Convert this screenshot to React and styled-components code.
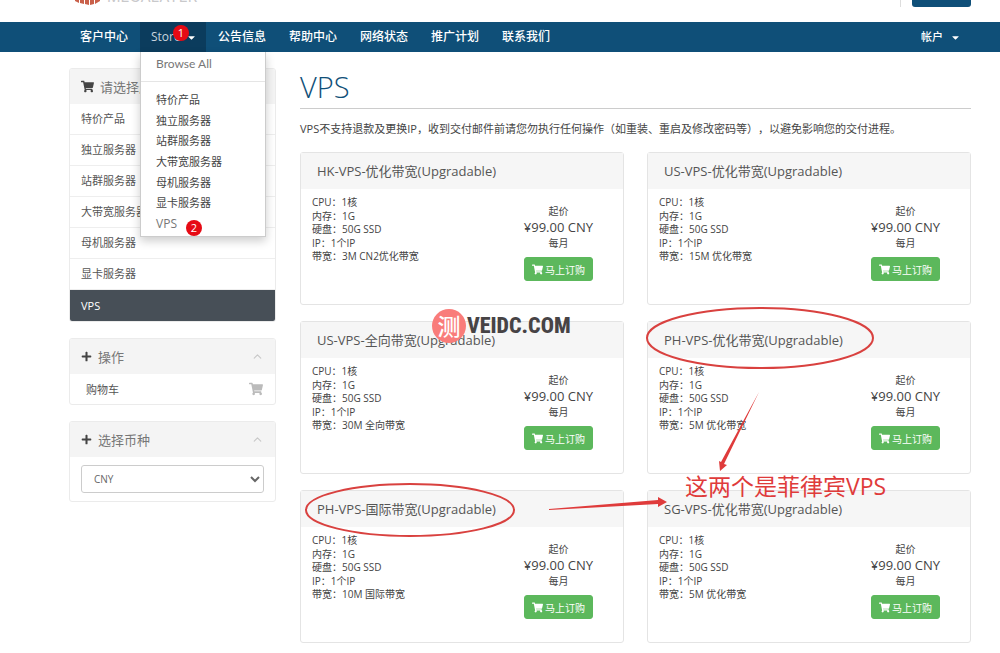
import React from 'react';
import styled, { createGlobalStyle } from 'styled-components';
import { FaShoppingCart, FaPlus, FaCaretDown } from 'react-icons/fa';
import { ChevronUp } from 'lucide-react';

const Global = createGlobalStyle`
  * { box-sizing: border-box; }
  body {
    margin: 0;
    background: #fff;
    color: #444;
    font-family: "Open Sans", "Noto Sans CJK SC", sans-serif;
    font-size: 11px;
    text-spacing-trim: space-all;
  }
  a { color: inherit; text-decoration: none; }
  ul { list-style: none; margin: 0; padding: 0; }
  h1, h2, h3, p { margin: 0; font-weight: 400; }
`;

const Page = styled.div`
  min-height: 100vh;
  overflow: hidden;
`;

const Header = styled.header`
  display: flex;
  justify-content: space-between;
  height: 22px;
  padding: 0 29px 0 69px;
  overflow: hidden;
`;

const Brand = styled.a`
  display: flex;
  align-items: flex-end;
  gap: 5px;
  height: 5px;
  padding-left: 5px;
  color: #c9c9cb;
  font-family: Inter, sans-serif;
  font-size: 15px;
  line-height: 16px;
`;

const HeaderActions = styled.div`
  display: flex;
  align-items: flex-start;
  height: 7px;
  border-left: 1px solid #ddd;
  padding-left: 11px;
`;

const HeaderButton = styled.button`
  width: 59px;
  height: 7px;
  padding: 0;
  border: 0;
  border-radius: 0 0 3px 3px;
  background: #0f4f78;
`;

const Nav = styled.nav`
  display: flex;
  justify-content: space-between;
  height: 30px;
  padding: 0 29px 0 69px;
  background: #0f4f78;
`;

const NavList = styled.ul`
  display: flex;
  gap: 1px;
`;

const NavItem = styled.li`
  position: relative;
  width: ${(p) => (p.$open ? '66px' : 'auto')};
  background: ${(p) => (p.$open ? '#0b3c5d' : 'transparent')};
`;

const NavLink = styled.a`
  display: flex;
  align-items: center;
  gap: ${(p) => p.$gap || '0'};
  height: 30px;
  padding: 0 11px;
  color: ${(p) => (p.$dim ? '#c9d5de' : '#fff')};
  font-size: ${(p) => (p.$small ? '11px' : '12px')};
  font-weight: ${(p) => (p.$dim ? 400 : 500)};
  line-height: 16px;
  svg { flex: none; width: 9px; height: 11px; color: #fff; }
`;

const Badge = styled.span`
  position: absolute;
  left: ${(p) => p.$left};
  top: ${(p) => p.$top};
  width: 16px;
  height: 16px;
  border-radius: 50%;
  background: #e60a14;
  color: #fff;
  font-size: 11px;
  line-height: 16px;
  text-align: center;
`;

const Menu = styled.div`
  position: absolute;
  z-index: 5;
  top: 30px;
  left: 0;
  width: 126px;
  border: 1px solid #ccc;
  border-top: 0;
  background: #fff;
  box-shadow: 0 4px 9px rgba(0, 0, 0, 0.2);
`;

const MenuTop = styled.a`
  display: block;
  height: 30px;
  padding: 0 15px;
  border-bottom: 1px solid #e5e5e5;
  color: #777;
  font-family: Lato, sans-serif;
  font-size: 12px;
  line-height: 24px;
`;

const MenuList = styled.ul`
  display: grid;
  grid-auto-rows: 1fr;
  height: 144px;
  margin: 8px 0 2px;
  li { display: flex; align-items: center; padding: 0 15px; line-height: 16px; }
  li:last-child { font-size: 12px; color: #777; }
`;

const Body = styled.div`
  display: flex;
  align-items: flex-start;
  gap: 24px;
  padding: 16px 29px 10px 69px;
`;

const Sidebar = styled.aside`
  display: flex;
  flex-direction: column;
  gap: 16px;
  flex: 0 0 207px;
`;

const Panel = styled.section`
  border: 1px solid #ebebeb;
  border-radius: 3px;
  overflow: hidden;
`;

const PanelHead = styled.h2`
  display: flex;
  align-items: center;
  gap: 6px;
  height: 35px;
  padding: 0 11px;
  background: #f4f4f4;
  color: #777;
  font-size: 13px;
  line-height: 20px;
  svg { color: #444; }
  svg.up { margin-left: auto; color: #c8c8c8; }
`;

const SideList = styled.div`
  display: grid;
  grid-auto-rows: 31px;
`;

const SideLink = styled.a`
  display: flex;
  align-items: center;
  padding: 0 11px;
  border-bottom: 1px solid #eee;
  color: ${(p) => (p.$active ? '#fff' : '#555')};
  background: ${(p) => (p.$active ? '#474f57' : '#fff')};
  line-height: 16px;
  &:last-child { border-bottom: 0; }
`;

const CartLink = styled.a`
  display: flex;
  align-items: center;
  justify-content: space-between;
  height: 30px;
  padding: 0 12px 0 16px;
  color: #555;
  svg { color: #bbb; }
`;

const SelectWrap = styled.div`
  padding: 8px 11px;
`;

const Select = styled.select`
  display: block;
  width: 100%;
  height: 28px;
  padding: 0 0 0 8px;
  border: 1px solid #ccc;
  border-radius: 3px;
  background: #fff;
  color: #666;
  font: 10px "Open Sans", sans-serif;
`;

const Main = styled.main`
  flex: 1;
  min-width: 0;
`;

const Title = styled.h1`
  height: 41px;
  border-bottom: 1px solid #ccc;
  color: #0f4f78;
  font-family: "Open Sans", sans-serif;
  font-size: 29px;
  font-weight: 300;
  line-height: 38px;
`;

const Notice = styled.p`
  padding: 12px 0 15px;
  line-height: 16px;
`;

const Canvas = styled.div`
  position: relative;
`;

const Grid = styled.div`
  display: grid;
  grid-template-columns: 1fr 1fr;
  gap: 16px 23px;
`;

const Card = styled.article`
  height: 153px;
  border: 1px solid #e4e4e4;
  border-radius: 3px;
`;

const CardHead = styled.h3`
  height: 36px;
  padding: 0 16px;
  background: #f6f6f6;
  color: #555;
  font-size: 13px;
  line-height: 36px;
`;

const CardBody = styled.div`
  display: flex;
  justify-content: space-between;
  padding: 7px 30px 0 11px;
`;

const Specs = styled.ul`
  display: grid;
  grid-auto-rows: 1fr;
  height: 68px;
  font-size: 10px;
  line-height: 13px;
`;

const Offer = styled.div`
  display: flex;
  flex-direction: column;
  align-items: center;
  padding-top: 7px;
  font-size: 10px;
  line-height: 16px;
`;

const Price = styled.strong`
  font-size: 13px;
  font-weight: 400;
  line-height: 16px;
`;

const Order = styled.button`
  display: flex;
  align-items: center;
  justify-content: center;
  gap: 2px;
  width: 69px;
  height: 24px;
  margin-top: 6px;
  padding: 0;
  border: 1px solid #5cb85c;
  border-radius: 3px;
  background: #5cb85c;
  color: #fff;
  font: 10px "Open Sans", "Noto Sans CJK SC", sans-serif;
`;

const Marks = styled.svg`
  position: absolute;
  left: 0;
  top: 0;
  width: 671px;
  height: 491px;
  overflow: visible;
  pointer-events: none;
`;

const Remark = styled.span`
  position: absolute;
  left: 385px;
  top: 318px;
  color: #df3b3b;
  font-size: 23px;
  line-height: 32px;
  white-space: nowrap;
`;

const Watermark = styled.div`
  position: absolute;
  left: 132px;
  top: 157px;
  display: flex;
  align-items: center;
  gap: 1px;
  color: #474345;
  font: 800 22px/34px "Roboto Condensed", "Liberation Serif", serif;
`;

const Seal = styled.span`
  width: 34px;
  height: 34px;
  border-radius: 50%;
  background: #f97c7a;
  color: #fff;
  font: 500 23px/32px "Noto Sans CJK SC", sans-serif;
  text-align: center;
`;

const categories = ['特价产品', '独立服务器', '站群服务器', '大带宽服务器', '母机服务器', '显卡服务器', 'VPS'];
const navAfter = ['公告信息', '帮助中心', '网络状态', '推广计划', '联系我们'];
const plans = [
  ['HK-VPS-优化带宽(Upgradable)', '3M CN2优化带宽'],
  ['US-VPS-优化带宽(Upgradable)', '15M 优化带宽'],
  ['US-VPS-全向带宽(Upgradable)', '30M 全向带宽'],
  ['PH-VPS-优化带宽(Upgradable)', '5M 优化带宽'],
  ['PH-VPS-国际带宽(Upgradable)', '10M 国际带宽'],
  ['SG-VPS-优化带宽(Upgradable)', '5M 优化带宽'],
];

function Plan({ name, bandwidth }) {
  return (
    <Card>
      <CardHead>{name}</CardHead>
      <CardBody>
        <Specs>
          <li>CPU：1核</li>
          <li>内存：1G</li>
          <li>硬盘：50G SSD</li>
          <li>IP：1个IP</li>
          <li>带宽：{bandwidth}</li>
        </Specs>
        <Offer>
          <span>起价</span>
          <Price>¥99.00 CNY</Price>
          <span>每月</span>
          <Order type="button"><FaShoppingCart size={11} />马上订购</Order>
        </Offer>
      </CardBody>
    </Card>
  );
}

export default function App() {
  return (
    <Page>
      <Global />
      <Header>
        <Brand href="#">
          <svg width="28" height="22" viewBox="0 0 28 22" fill="#c9604a" aria-hidden="true">
            <path d="M1 5h4v15l-4-2zM6 3h4v18l-4-1zM11 2h4v20l-4-1zM16 3l4-1v19l-4 1zM21 4l5-2v16l-5 3z" />
          </svg>
          MEGALAYER
        </Brand>
        <HeaderActions><HeaderButton type="button" aria-label="登录" /></HeaderActions>
      </Header>
      <Nav>
        <NavList>
          <NavItem><NavLink href="#">客户中心</NavLink></NavItem>
          <NavItem $open>
            <NavLink href="#" $dim $gap="6px">Store <FaCaretDown /></NavLink>
            <Badge $left="33px" $top="3px">1</Badge>
            <Menu>
              <MenuTop href="#">Browse All</MenuTop>
              <MenuList>
                {categories.map((c) => <li key={c}><a href="#">{c}</a></li>)}
              </MenuList>
              <Badge $left="45px" $top="168px">2</Badge>
            </Menu>
          </NavItem>
          {navAfter.map((n) => <NavItem key={n}><NavLink href="#">{n}</NavLink></NavItem>)}
        </NavList>
        <NavLink href="#" $small $gap="8px">帐户 <FaCaretDown /></NavLink>
      </Nav>
      <Body>
        <Sidebar>
          <Panel>
            <PanelHead><FaShoppingCart size={13} />请选择产品</PanelHead>
            <SideList>
              {categories.map((c) => <SideLink key={c} href="#" $active={c === 'VPS'}>{c}</SideLink>)}
            </SideList>
          </Panel>
          <Panel>
            <PanelHead><FaPlus size={11} />操作<ChevronUp className="up" size={13} /></PanelHead>
            <CartLink href="#">购物车<FaShoppingCart size={14} /></CartLink>
          </Panel>
          <Panel>
            <PanelHead><FaPlus size={11} />选择币种<ChevronUp className="up" size={13} /></PanelHead>
            <SelectWrap>
              <Select aria-label="选择币种" defaultValue="CNY"><option>CNY</option></Select>
            </SelectWrap>
          </Panel>
        </Sidebar>
        <Main>
          <Title>VPS</Title>
          <Notice>VPS不支持退款及更换IP，收到交付邮件前请您勿执行任何操作（如重装、重启及修改密码等），以避免影响您的交付进程。</Notice>
          <Canvas>
            <Grid>
              {plans.map(([name, bandwidth]) => <Plan key={name} name={name} bandwidth={bandwidth} />)}
            </Grid>
            <Marks viewBox="0 0 671 491" aria-hidden="true">
              <g fill="none" stroke="#d9413f" strokeWidth="2">
                <ellipse cx="460" cy="186" rx="113" ry="30" />
                <ellipse cx="110" cy="358" rx="104" ry="26" />
              </g>
              <g fill="#df3b3b">
                <path d="M459 240L424 312L427 313L420 319L419 309L421 310Z" />
                <path d="M249 357L358 348L358 345L367 350L358 355L358 352L249 358Z" />
              </g>
            </Marks>
            <Remark>这两个是菲律宾VPS</Remark>
            <Watermark><Seal>测</Seal>VEIDC.COM</Watermark>
          </Canvas>
        </Main>
      </Body>
    </Page>
  );
}
